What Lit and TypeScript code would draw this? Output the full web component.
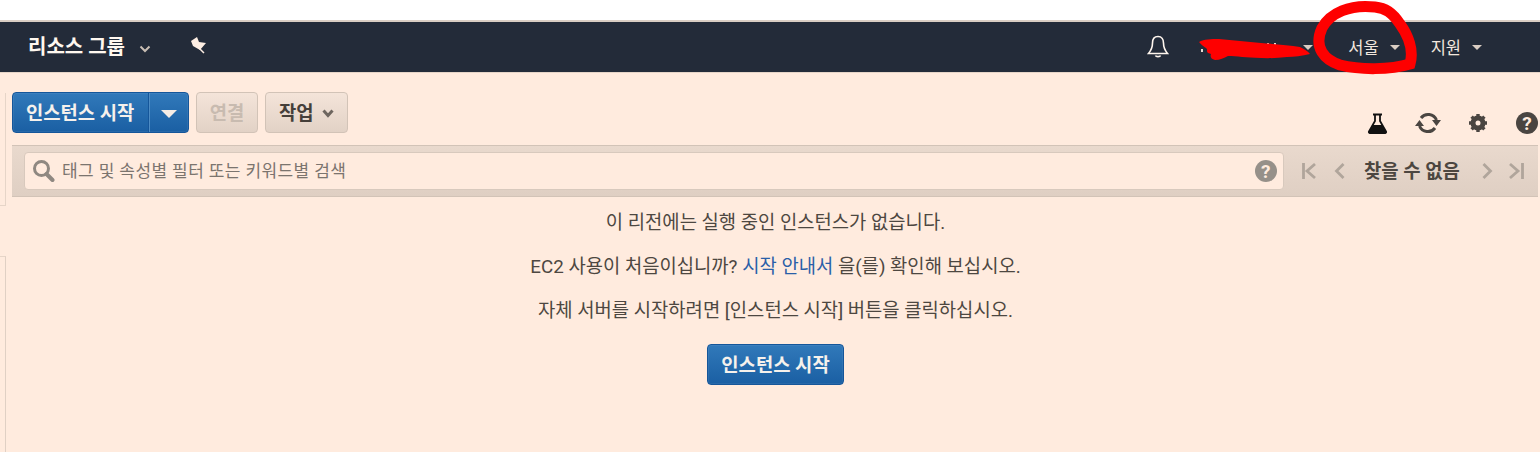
import { LitElement, html, css } from "lit";
import { customElement } from "lit/decorators.js";

@customElement("app-root")
export class AppRoot extends LitElement {
  static styles = css`
    :host { display: block; width: 1540px; height: 452px; overflow: hidden; position: relative; background: #ffebde; font-family: Roboto, "Noto Sans CJK KR", sans-serif; color: #47423d; }
    * { box-sizing: border-box; }
    .top { height: 20px; background: #fff; }
    .nav { height: 53px; border-top: 2px solid #d9cdc3; border-bottom: 1px solid #e6d5c8; background: #232b39; display: flex; align-items: center; color: #fff6ee; }
    .brand { margin-left: 28px; font-size: 20px; font-weight: 700; color: #fff8f0; width: 97px; white-space: nowrap; margin-top: -4px; }
    .chev { margin-left: 14px; margin-top: 3px; display: block; }
    .pin { margin-left: 39px; margin-top: -4px; display: block; }
    .spacer { flex: 1; }
    .bell { display: block; margin-right: 21px; }
    .acct { width: 124px; display: flex; justify-content: flex-end; padding-right: 1px; }
    .mi { font-size: 16.500px; display: flex; align-items: center; white-space: nowrap; color: #f3e8df; }
    .mi .car { margin-left: 11px; }
    .seoul { margin-left: 34px; }
    .support { margin-left: 31px; margin-right: 58px; }
    .car { display: block; width: 0; height: 0; border-left: 5px solid transparent; border-right: 5px solid transparent; border-top: 5px solid #d9cdc3; }
    .body { display: flex; height: 380px; }
    .side { width: 6px; flex: none; display: flex; flex-direction: column; padding-top: 20px; }
    .side1 { height: 113px; border-right: 1px solid #e6d5c8; border-bottom: 1px solid #e6d5c8; }
    .side2 { margin-top: 50px; flex: 1; border-right: 1px solid #e0d0c4; border-top: 1px solid #e6d5c8; }
    .main { flex: 1; padding: 19px 2px 0 6px; min-width: 0; }
    .toolbar { display: flex; height: 53px; align-items: flex-start; }
    .btn { height: 41px; border-radius: 4px; font-weight: 700; font-size: 18.800px; display: flex; align-items: center; white-space: nowrap; }
    .btn .t { display: block; margin-top: -3px; }
    .primary { background: linear-gradient(#3179ba, #1a5fa3); border: 1px solid #15569a; color: #f6f1ec; box-shadow: inset 0 0 0 1px rgba(255,255,255,.06); }
    .launch { width: 177px; }
    .launch .l { width: 136px; padding-left: 13px; height: 100%; display: flex; align-items: center; border-right: 1px solid #15569a; }
    .launch .r { flex: 1; display: flex; justify-content: center; align-items: center; border-left: 1px solid #4e8cc4; height: 100%; }
    .launch .tri { width: 0; height: 0; border-left: 8px solid transparent; border-right: 8px solid transparent; border-top: 8px solid #f5ece5; margin-top: 2px; }
    .sec { background: linear-gradient(#f4e4d9, #e2d2c6); border: 1px solid #d2c3b7; }
    .connect { width: 62px; margin-left: 7px; justify-content: center; color: #c8bbb0; }
    .action { width: 83px; margin-left: 7px; padding-left: 13px; color: #453f3a; }
    .action svg { margin-left: 8px; margin-top: 1px; }
    .tools { margin-left: auto; margin-top: 20px; display: flex; gap: 27px; align-items: center; }
    .tools svg { display: block; }
    .tools .help { margin-left: 1px; }
    .filter { height: 52px; background: linear-gradient(#e9d9cd, #dfcfc3); border-top: 1px solid #d2c3b7; border-bottom: 1px solid #d2c3b7; display: flex; align-items: center; padding-left: 12px; }
    .search { width: 1260px; height: 38px; background: #ffebde; border: 1px solid #d8c9bd; border-radius: 4px; display: flex; align-items: center; padding-left: 7px; font-size: 17px; color: #7b746e; letter-spacing: .4px; }
    .search .ph { margin-left: 7px; margin-top: -3px; white-space: nowrap; }
    .search .q { margin-left: auto; margin-right: 6px; display: block; }
    .pager { display: flex; align-items: center; margin-left: 18px; }
    .pager svg { display: block; }
    .first { margin-right: 18px; }
    .found { font-size: 18.800px; font-weight: 700; color: #4c4640; margin: -3px 22px 0 19px; width: 96px; white-space: nowrap; }
    .next { margin-right: 16px; }
    .msg { display: flex; flex-direction: column; align-items: center; font-size: 18.800px; color: #4d4741; padding-top: 14px; margin-left: -12px; width: 1540px; padding-left: 11px; }
    .msg p { margin: 0; height: 24px; line-height: 24px; white-space: nowrap; }
    .msg p + p { margin-top: 20px; }
    .msg a { color: #2a5fa8; text-decoration: none; }
    .cta { width: 137px; justify-content: center; margin-top: 21px; }
    .cta .t { margin-top: -2px; }
    .scribble { position: absolute; inset: 0; pointer-events: none; }
  `;

  render() {
    return html`
      <div class="top"></div>
      <div class="nav">
        <div class="brand">리소스 그룹</div>
        <svg class="chev" width="12" height="8" viewBox="0 0 12 8"><path d="M1.500 1.500 6 6l4.500-4.500" fill="none" stroke="#c9beb4" stroke-width="2"/></svg>
        <svg class="pin" width="18" height="18" viewBox="0 0 18 18"><path d="M1 5 7 1 9 6l7 1-6 7-7-4z" fill="#fdeee3"/><path d="m9 12 5 5" stroke="#fdeee3" stroke-width="1.500"/></svg>
        <div class="spacer"></div>
        <svg class="bell" width="22" height="24" viewBox="0 0 22 24"><path d="M11 1.500c-3.800 0-5.500 3-5.500 6.500 0 5-1.500 7.500-4 10.500h19c-2.500-3-4-5.500-4-10.500 0-3.500-1.700-6.500-5.500-6.500zM8.500 20.500c.5 1.500 4.500 1.500 5 0" fill="none" stroke="#fff6ee" stroke-width="1.600"/></svg>
        <div class="acct mi"><span class="car"></span></div>
        <div class="mi seoul">서울<span class="car"></span></div>
        <div class="mi support">지원<span class="car"></span></div>
      </div>
      <div class="body">
        <div class="side"><div class="side1"></div><div class="side2"></div></div>
        <div class="main">
          <div class="toolbar">
            <div class="btn primary launch"><div class="l"><span class="t">인스턴스 시작</span></div><div class="r"><span class="tri"></span></div></div>
            <div class="btn sec connect"><span class="t">연결</span></div>
            <div class="btn sec action"><span class="t">작업</span><svg width="12" height="9" viewBox="0 0 12 9"><path d="M1.500 1.500 6 6.500l4.500-5" fill="none" stroke="#6e665f" stroke-width="3"/></svg></div>
            <div class="tools">
              <svg width="21" height="21" viewBox="0 0 21 21"><path d="M6 1.500h9M8 1.500V8L2 18.500a1 1 0 0 0 1 1.500h15a1 1 0 0 0 1-1.500L13 8V1.500" fill="none" stroke="#111" stroke-width="1.800"/><path d="M5.500 12h10l4 8H1.500z" fill="#111"/></svg>
              <svg width="26" height="22" viewBox="0 0 26 22"><path d="M6 6A9 9 0 0 1 21.500 8M20 16A9 9 0 0 1 4.500 14" fill="none" stroke="#4a4541" stroke-width="3"/><path d="M17 8h9l-4.500 6zM0 14h9L4.500 8z" fill="#4a4541"/></svg>
              <svg width="20" height="20" viewBox="0 0 20 20"><circle cx="10" cy="10" r="5" fill="none" stroke="#4a4541" stroke-width="5"/><path d="M10 1v18M1 10h18M3.600 3.600l12.800 12.800M16.400 3.600 3.600 16.400" stroke="#4a4541" stroke-width="3.400"/><circle cx="10" cy="10" r="2.500" fill="#ffebde"/></svg>
              <svg class="help" width="22" height="22" viewBox="0 0 22 22"><circle cx="11" cy="11" r="11" fill="#4a4541"/><text x="11" y="17.500" font-size="19" font-weight="700" text-anchor="middle" fill="#ffebde" font-family="Roboto">?</text></svg>
            </div>
          </div>
          <div class="filter">
            <div class="search">
              <svg width="23" height="24" viewBox="0 0 23 24"><circle cx="9.500" cy="9.500" r="7" fill="none" stroke="#8f8881" stroke-width="3"/><path d="m14.500 15 6 6" stroke="#8f8881" stroke-width="4" stroke-linecap="round"/></svg>
              <span class="ph">태그 및 속성별 필터 또는 키워드별 검색</span>
              <svg class="q" width="22" height="22" viewBox="0 0 22 22"><circle cx="11" cy="11" r="11" fill="#969089"/><text x="11" y="17.500" font-size="19" font-weight="700" text-anchor="middle" fill="#ffebde" font-family="Roboto">?</text></svg>
            </div>
            <div class="pager">
              <svg class="first" width="14" height="18" viewBox="0 0 14 18"><path d="M13 2 5 9l8 7M1.500 1v16" fill="none" stroke="#b0a59b" stroke-width="2.800"/></svg>
              <svg width="11" height="18" viewBox="0 0 11 18"><path d="M9.500 2 2.500 9l7 7" fill="none" stroke="#b0a59b" stroke-width="2.800"/></svg>
              <div class="found">찾을 수 없음</div>
              <svg class="next" width="11" height="18" viewBox="0 0 11 18"><path d="m1.500 2 7 7-7 7" fill="none" stroke="#b0a59b" stroke-width="2.800"/></svg>
              <svg width="15" height="18" viewBox="0 0 15 18"><path d="m1 2 8 7-8 7M13.500 1v16" fill="none" stroke="#b0a59b" stroke-width="2.800"/></svg>
            </div>
          </div>
          <div class="msg">
            <p>이 리전에는 실행 중인 인스턴스가 없습니다.</p>
            <p>EC2 사용이 처음이십니까? <a>시작 안내서</a> 을(를) 확인해 보십시오.</p>
            <p>자체 서버를 시작하려면 [인스턴스 시작] 버튼을 클릭하십시오.</p>
            <div class="btn primary cta"><span class="t">인스턴스 시작</span></div>
          </div>
        </div>
      </div>
      <svg class="scribble" width="1540" height="452" viewBox="0 0 1540 452">
        <path d="M1268 43v2M1275 43v2M1202 49v3M1260 55v2" stroke="#e8ddd3" stroke-width="2" fill="none"/>
        <path d="M1199 42c5-3 12-3 20-3 14 1 28 3 42 4 14 1 28 2 39 4 4 2 8 4 10 7-8 2-16 3-23 3-15 2-30 1-45 0-5-1-10-1-14-1-4 2-8 4-13 4-4-1-5-3-4-6-4-1-4-2-4-4 1-2-3-2-8-8z" fill="#fe0000"/>
        <path d="M1375 7C1350 4 1330 13 1322 28 1313 48 1325 60 1340 65 1360 70 1390 70 1410 64 1414 50 1408 35 1400 24 1392 12 1385 8 1375 7z" fill="none" stroke="#fe0000" stroke-width="11" stroke-linecap="round"/>
      </svg>
    `;
  }
}
